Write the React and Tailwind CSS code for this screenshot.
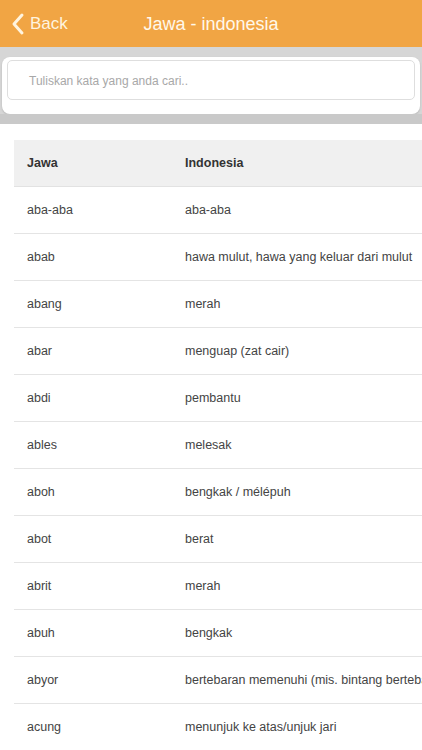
import React from 'react';

const rows = [
  ['aba-aba', 'aba-aba'],
  ['abab', 'hawa mulut, hawa yang keluar dari mulut'],
  ['abang', 'merah'],
  ['abar', 'menguap (zat cair)'],
  ['abdi', 'pembantu'],
  ['ables', 'melesak'],
  ['aboh', 'bengkak / mélépuh'],
  ['abot', 'berat'],
  ['abrit', 'merah'],
  ['abuh', 'bengkak'],
  ['abyor', 'bertebaran memenuhi (mis. bintang bertebaran di langit)'],
  ['acung', 'menunjuk ke atas/unjuk jari'],
];

export default function App() {
  return (
    <div className="h-[750px] w-[422px] overflow-hidden bg-white font-['Liberation_Sans',Arial,sans-serif]">
      {/* Nav bar */}
      <div className="relative flex h-[47px] items-center bg-[#f1a544]">
        <div className="flex items-center pl-[11px] text-[#fff4df]">
          <svg width="14" height="24" viewBox="0 0 14 24" fill="none" stroke="currentColor" strokeWidth="3" strokeLinecap="round" strokeLinejoin="round">
            <path d="M11 3 L3 12 L11 21" />
          </svg>
          <span className="ml-[5px] text-[17px] leading-none">Back</span>
        </div>
        <div className="absolute inset-x-0 top-0 flex h-[47px] items-center justify-center pointer-events-none">
          <span className="text-[18px] leading-none text-[#fff8ea]">Jawa - indonesia</span>
        </div>
      </div>

      {/* Search */}
      <div className="bg-[#d6d6d6] pt-[10px]">
        <div className="mx-[2px] rounded-[8px] bg-white px-[5px] pt-[3px] pb-[14px] shadow-[0_1px_2px_rgba(0,0,0,0.15)]">
          <div className="flex h-[40px] items-center rounded-[5px] border border-[#dedede] bg-white pl-[21px] pt-[2px] text-[12px] text-[#a8a8a8]">
            Tuliskan kata yang anda cari..
          </div>
        </div>
        <div className="h-[10px] bg-[#c9c9c9]" />
      </div>

      {/* Table */}
      <div className="pl-[14px] pt-[16px]">
        <div className="flex h-[47px] items-center border-b border-[#e2e2e2] bg-[#f0f0f0] text-[12.5px] font-bold text-[#333]">
          <div className="w-[171px] shrink-0 pl-[13px]">Jawa</div>
          <div className="whitespace-nowrap">Indonesia</div>
        </div>
        {rows.map(([jawa, indo]) => (
          <div key={jawa} className="flex h-[47px] items-center border-b border-[#e4e4e4] text-[12.5px] text-[#444]">
            <div className="w-[171px] shrink-0 pl-[13px]">{jawa}</div>
            <div className="whitespace-nowrap">{indo}</div>
          </div>
        ))}
      </div>
    </div>
  );
}
